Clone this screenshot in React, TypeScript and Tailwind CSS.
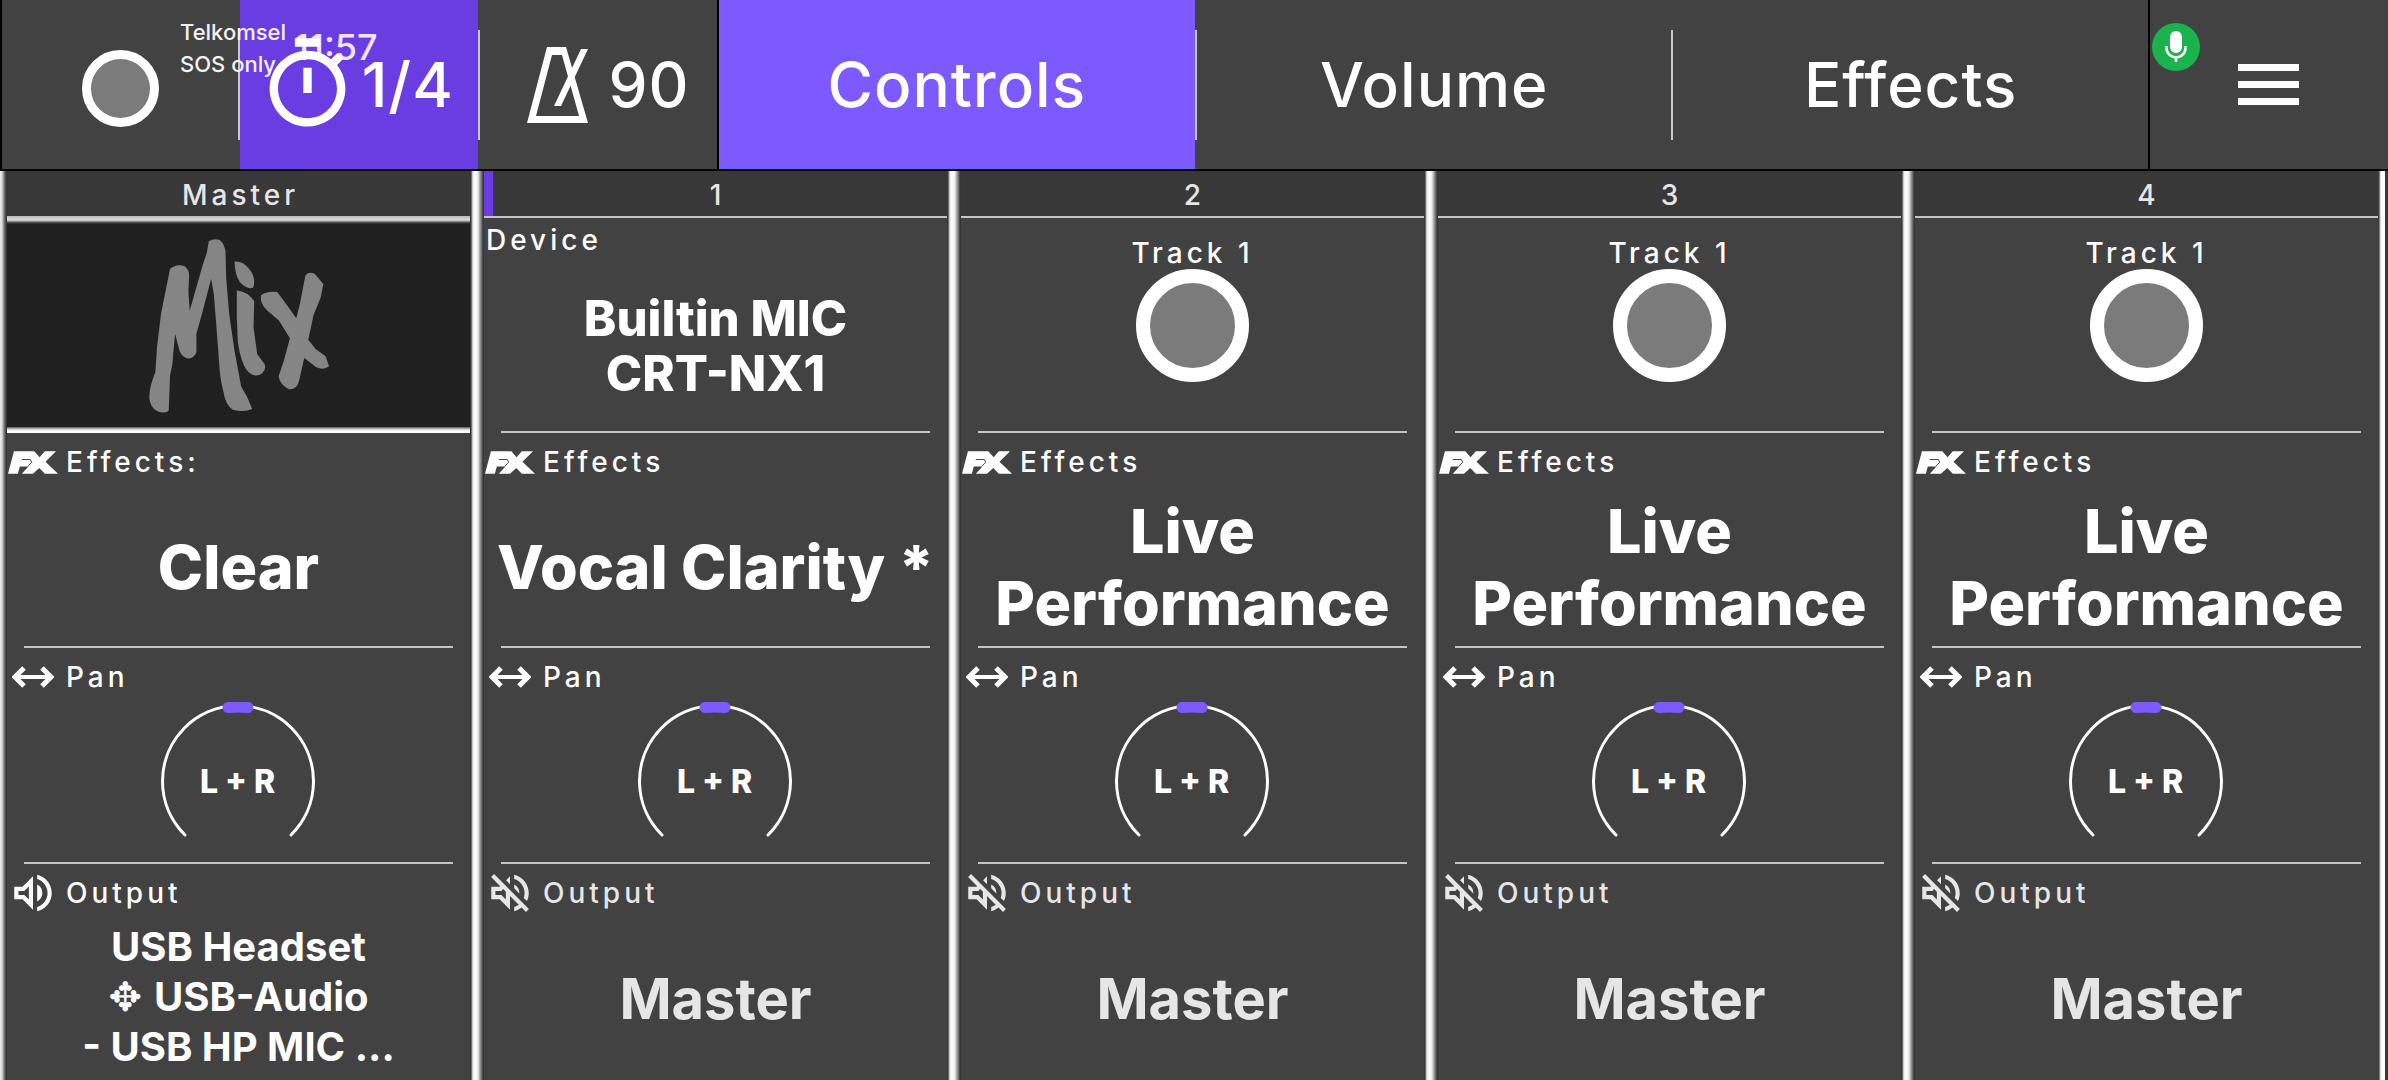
import type { ReactNode } from "react";
import { MdOutlineTimer, MdOutlineVolumeOff, MdOutlineVolumeUp } from "react-icons/md";

const TRACKS = [
  { id: 1, device: ["Builtin MIC", "CRT-NX1"], fx: ["Vocal Clarity *"], active: true },
  { id: 2, fx: ["Live", "Performance"] },
  { id: 3, fx: ["Live", "Performance"] },
  { id: 4, fx: ["Live", "Performance"] },
];

function FxIcon() {
  return (
    <svg viewBox="0 0 152 68" className="h-[23px] w-[50px]" aria-hidden="true">
      <path
        fill="#fff"
        d="M0 68 18 0H80L96 18 112 0H146L114 32 152 68H112L95 51 76 68H42L62 46H36L30 68Z"
      />
      <path fill="none" stroke="#424242" strokeWidth="3" d="M42 25H68L72 33 60 46" />
    </svg>
  );
}

function PanIcon() {
  return (
    <svg viewBox="0 0 42 22" className="h-[22px] w-[42px]" fill="none" stroke="#fff" aria-hidden="true">
      <path strokeWidth="4" d="M3 11H39" />
      <path strokeWidth="5" d="M12 2 3 11 12 20M30 2 39 11 30 20" />
    </svg>
  );
}

function MetronomeIcon() {
  return (
    <svg viewBox="0 0 61 76" className="h-[76px] w-[61px]" aria-hidden="true">
      <path
        fill="#fff"
        fillRule="evenodd"
        d="M20 0H39L61 76H0ZM25 8 9 69H52L35 8Z"
      />
      <path fill="#fff" d="M54 2H61L34 59H27Z" />
    </svg>
  );
}

function MixArt() {
  return (
    <svg viewBox="440 230 560 530" className="h-[177px] w-[187px]" fill="#858585" role="img" aria-label="Mix">
      <path d="M509 325Q530 308 554 318Q568 330 566 352L564 395 568 450 608 310 619 278 625 243Q640 233 658 239L668 250 675 270 677 350 686 460 702 570 722 678Q742 708 755 745Q730 756 697 747Q675 735 668 690Q660 660 657 620L648 500 640 400 632 355 606 455 588 520V575Q580 594 562 594 548 592 538 573L524 520 516 610 509 645 505 750Q488 762 465 748 449 735 447 712 446 680 465 635L470 560 482 460 500 370Z" />
      <path d="M702 304Q725 300 745 325 768 350 758 382 738 388 718 365 704 345 702 304Z" />
      <path d="M709 390Q740 392 761 422L759 500 770 580 792 610Q798 625 785 638 765 652 745 636 722 612 712 545L709 470Z" />
      <path d="M781 405Q800 390 830 395L860 435 887 473 898 430 914 347Q922 332 942 340L968 371 960 412 939 463 923 538 945 565 975 587 985 617Q970 630 947 620L911 592 895 662Q888 688 865 686 840 675 834 648L850 600 868 533 835 480 800 450Q778 430 781 405Z" />
    </svg>
  );
}

function MicIcon() {
  return (
    <svg viewBox="0 0 22 32" className="h-8 w-[22px]" fill="none" aria-hidden="true">
      <rect x="5" y="0" width="12" height="22" rx="6" fill="#fff" />
      <path stroke="#fff" strokeWidth="2.5" d="M1.500 15V17A9.500 9.500 0 0 0 20.500 17V15M11 26V31" />
    </svg>
  );
}

function Rule() {
  return <div className="mx-[17px] h-0.5 shrink-0 bg-[#c4c4c4]" />;
}

function HeaderLine() {
  return <span className="h-[110px] w-0.5 shrink-0 bg-[#c9c9c9]" />;
}

function Label({ icon, muted, children }: { icon: ReactNode; muted?: boolean; children: ReactNode }) {
  return (
    <div className={`flex h-[58px] shrink-0 items-center gap-2 ${muted ? "text-[#e6e6e6]" : "text-white"}`}>
      <span className="flex w-[51px] justify-center">{icon}</span>
      <span className="text-[28px] font-medium tracking-[4px]">{children}</span>
    </div>
  );
}

function Effects({ label, lines }: { label: string; lines: string[] }) {
  return (
    <section className="flex h-[215px] flex-col">
      <Label icon={<FxIcon />}>{label}</Label>
      <button className="flex flex-1 flex-col items-center justify-center pb-1 text-[61px] leading-[72px] font-extrabold whitespace-nowrap">
        {lines.map((line) => (
          <span key={line}>{line}</span>
        ))}
      </button>
      <Rule />
    </section>
  );
}

function Pan() {
  return (
    <section className="flex h-[216px] flex-col">
      <Label icon={<PanIcon />}>Pan</Label>
      <button className="-mt-1 grid flex-1 place-items-center pr-0.5" aria-label="Pan: L + R">
        <svg viewBox="-80 -80 160 160" className="col-start-1 row-start-1 size-[160px]" fill="none" strokeLinecap="round" aria-hidden="true">
          <path stroke="#fff" strokeWidth="3" d="M-53 53A75.500 75.500 0 1 1 53 53" />
          <path stroke="#7c5aff" strokeWidth="11" d="M-10 -74.500Q0 -75.500 10 -74.500" />
        </svg>
        <span className="col-start-1 row-start-1 text-[32px] leading-10 font-extrabold">L + R</span>
      </button>
      <Rule />
    </section>
  );
}

function Divider() {
  return (
    <div className="w-[14px] shrink-0 bg-[linear-gradient(90deg,#303030_0px,#404040_1px,#a0a0a0_2px,#ededed_3px,#ffffff_5px,#ececec_8px,#c0c0c0_9px,#808080_11px,#3c3c3c_13px,#303030_14px)]" />
  );
}

function ColumnTitle({ active, children }: { active?: boolean; children: ReactNode }) {
  return (
    <h2 className="flex h-[45px] shrink-0 items-stretch bg-[#383838] text-[28px] font-medium tracking-[4px] text-[#e6e6e6]">
      <span className={active ? "w-[9px] bg-[#6a3de2]" : "w-[9px]"} />
      <span className="flex flex-1 items-center justify-center pt-[3px] pl-1">{children}</span>
      <span className="w-[9px]" />
    </h2>
  );
}

export default function App() {
  return (
    <div className="flex min-h-screen flex-col overflow-hidden bg-[#424242] font-['Inter',sans-serif] text-white">
      <header className="relative flex h-[171px] shrink-0 border-b-2 border-l-2 border-black text-[62px] leading-none font-medium tracking-[1px]">
        <button className="flex flex-1 basis-0 items-center" aria-label="Record">
          <span className="flex flex-1 justify-center pt-2">
            <span className="size-[77px] rounded-full border-[9px] border-white bg-[#7b7b7b]" />
          </span>
          <HeaderLine />
        </button>
        <button className="flex flex-1 basis-0 items-center justify-center bg-[#6a3de2]">
          <MdOutlineTimer className="relative z-10 -ml-2 size-[101px] shrink-0" />
          <span className="relative z-10 pl-1">1/4</span>
        </button>
        <button className="flex flex-1 basis-0 items-center">
          <HeaderLine />
          <span className="flex flex-1 items-center justify-center gap-5 pl-5">
            <MetronomeIcon />
            <span>90</span>
          </span>
        </button>
        <nav className="flex flex-[6] basis-0 border-x-2 border-black">
          <button className="flex-1 bg-[#7c5aff]">Controls</button>
          <button className="flex flex-1 items-center">
            <HeaderLine />
            <span className="flex-1">Volume</span>
          </button>
          <button className="flex flex-1 items-center">
            <HeaderLine />
            <span className="flex-1">Effects</span>
          </button>
        </nav>
        <button className="flex flex-1 basis-0 flex-col items-center justify-center gap-[10px]" aria-label="Menu">
          <span className="h-[7px] w-[61px] bg-white" />
          <span className="h-[7px] w-[61px] bg-white" />
          <span className="h-[7px] w-[61px] bg-white" />
        </button>

        <div className="pointer-events-none absolute top-4 left-[178px] flex items-start gap-2 tracking-normal">
          <div className="flex flex-col text-[22px] leading-8 font-medium text-[#f2f2f2]">
            <span>Telkomsel</span>
            <span>SOS only</span>
          </div>
          <span className="text-[36px] leading-[62px] font-medium text-[#f1e2fd]">11:57</span>
        </div>
        <div className="absolute top-[23px] right-[188px] flex size-12 items-center justify-center rounded-full bg-[#1ab34d]">
          <MicIcon />
        </div>
      </header>

      <main className="flex flex-1">
        <div className="w-[7px] shrink-0 bg-[linear-gradient(90deg,#ececec_0px,#d8d8d8_2px,#808080_4px,#3c3c3c_6px,#303030_7px)]" />
        <article className="flex min-w-0 flex-1 basis-0 flex-col">
          <ColumnTitle>Master</ColumnTitle>
          <div className="flex h-[217px] shrink-0 flex-col bg-[#202020]">
            <div className="h-2 bg-[linear-gradient(180deg,#bdbdbd_0px,#c8c8c8_2px,#e0e0e0_3px,#b8b8b8_5px,#606060_6px,#202020_8px)]" />
            <div className="flex flex-1 items-center justify-center pl-1">
              <MixArt />
            </div>
            <div className="h-1.5 bg-[linear-gradient(180deg,#505050_0px,#c8c8c8_2px,#ffffff_4px,#ffffff_6px)]" />
          </div>
          <Effects label="Effects:" lines={["Clear"]} />
          <Pan />
          <section className="flex flex-col">
            <Label icon={<MdOutlineVolumeUp className="size-[50px]" />}>Output</Label>
            <button className="flex flex-col items-center text-[40px] leading-[50px] font-bold whitespace-nowrap">
              <span>USB Headset</span>
              <span className="flex items-center gap-3">
                <span className="font-['DejaVu_Sans',sans-serif]">✥</span>
                USB-Audio
              </span>
              <span>- USB HP MIC ...</span>
            </button>
          </section>
        </article>

        {TRACKS.map((track) => (
          <div key={track.id} className="flex min-w-0 grow basis-[14px]">
            <Divider />
            <article className="flex min-w-0 flex-1 flex-col">
              <ColumnTitle active={track.active}>{track.id}</ColumnTitle>
              <div className="h-0.5 shrink-0 bg-[#c4c4c4]" />
              <section className="flex h-[215px] shrink-0 flex-col">
                {track.device ? (
                  <>
                    <h3 className="h-11 pl-0.5 text-[28px] leading-[44px] font-medium tracking-[4px]">Device</h3>
                    <button className="flex flex-1 flex-col items-center justify-center pb-0.5 text-[49px] leading-[55px] font-extrabold">
                      {track.device.map((line) => (
                        <span key={line}>{line}</span>
                      ))}
                    </button>
                  </>
                ) : (
                  <button className="flex flex-1 flex-col items-center pt-[19px]">
                    <span className="text-[28px] leading-8 font-medium tracking-[4px]">Track 1</span>
                    <span className="size-[113px] rounded-full border-[14px] border-white bg-[#7b7b7b]" />
                  </button>
                )}
                <Rule />
              </section>
              <Effects label="Effects" lines={track.fx} />
              <Pan />
              <section className="flex flex-1 flex-col">
                <Label muted icon={<MdOutlineVolumeOff className="size-[50px]" />}>
                  Output
                </Label>
                <button className="flex-1 pb-1 text-[56px] leading-none font-bold text-[#e6e6e6]">Master</button>
              </section>
            </article>
          </div>
        ))}
        <div className="w-[10px] shrink-0 bg-[linear-gradient(90deg,#303030_0px,#505050_1px,#b0b0b0_2px,#ffffff_3px,#ffffff_7px,#3a3a3a_7px,#3a3a3a_10px)]" />
      </main>
    </div>
  );
}
